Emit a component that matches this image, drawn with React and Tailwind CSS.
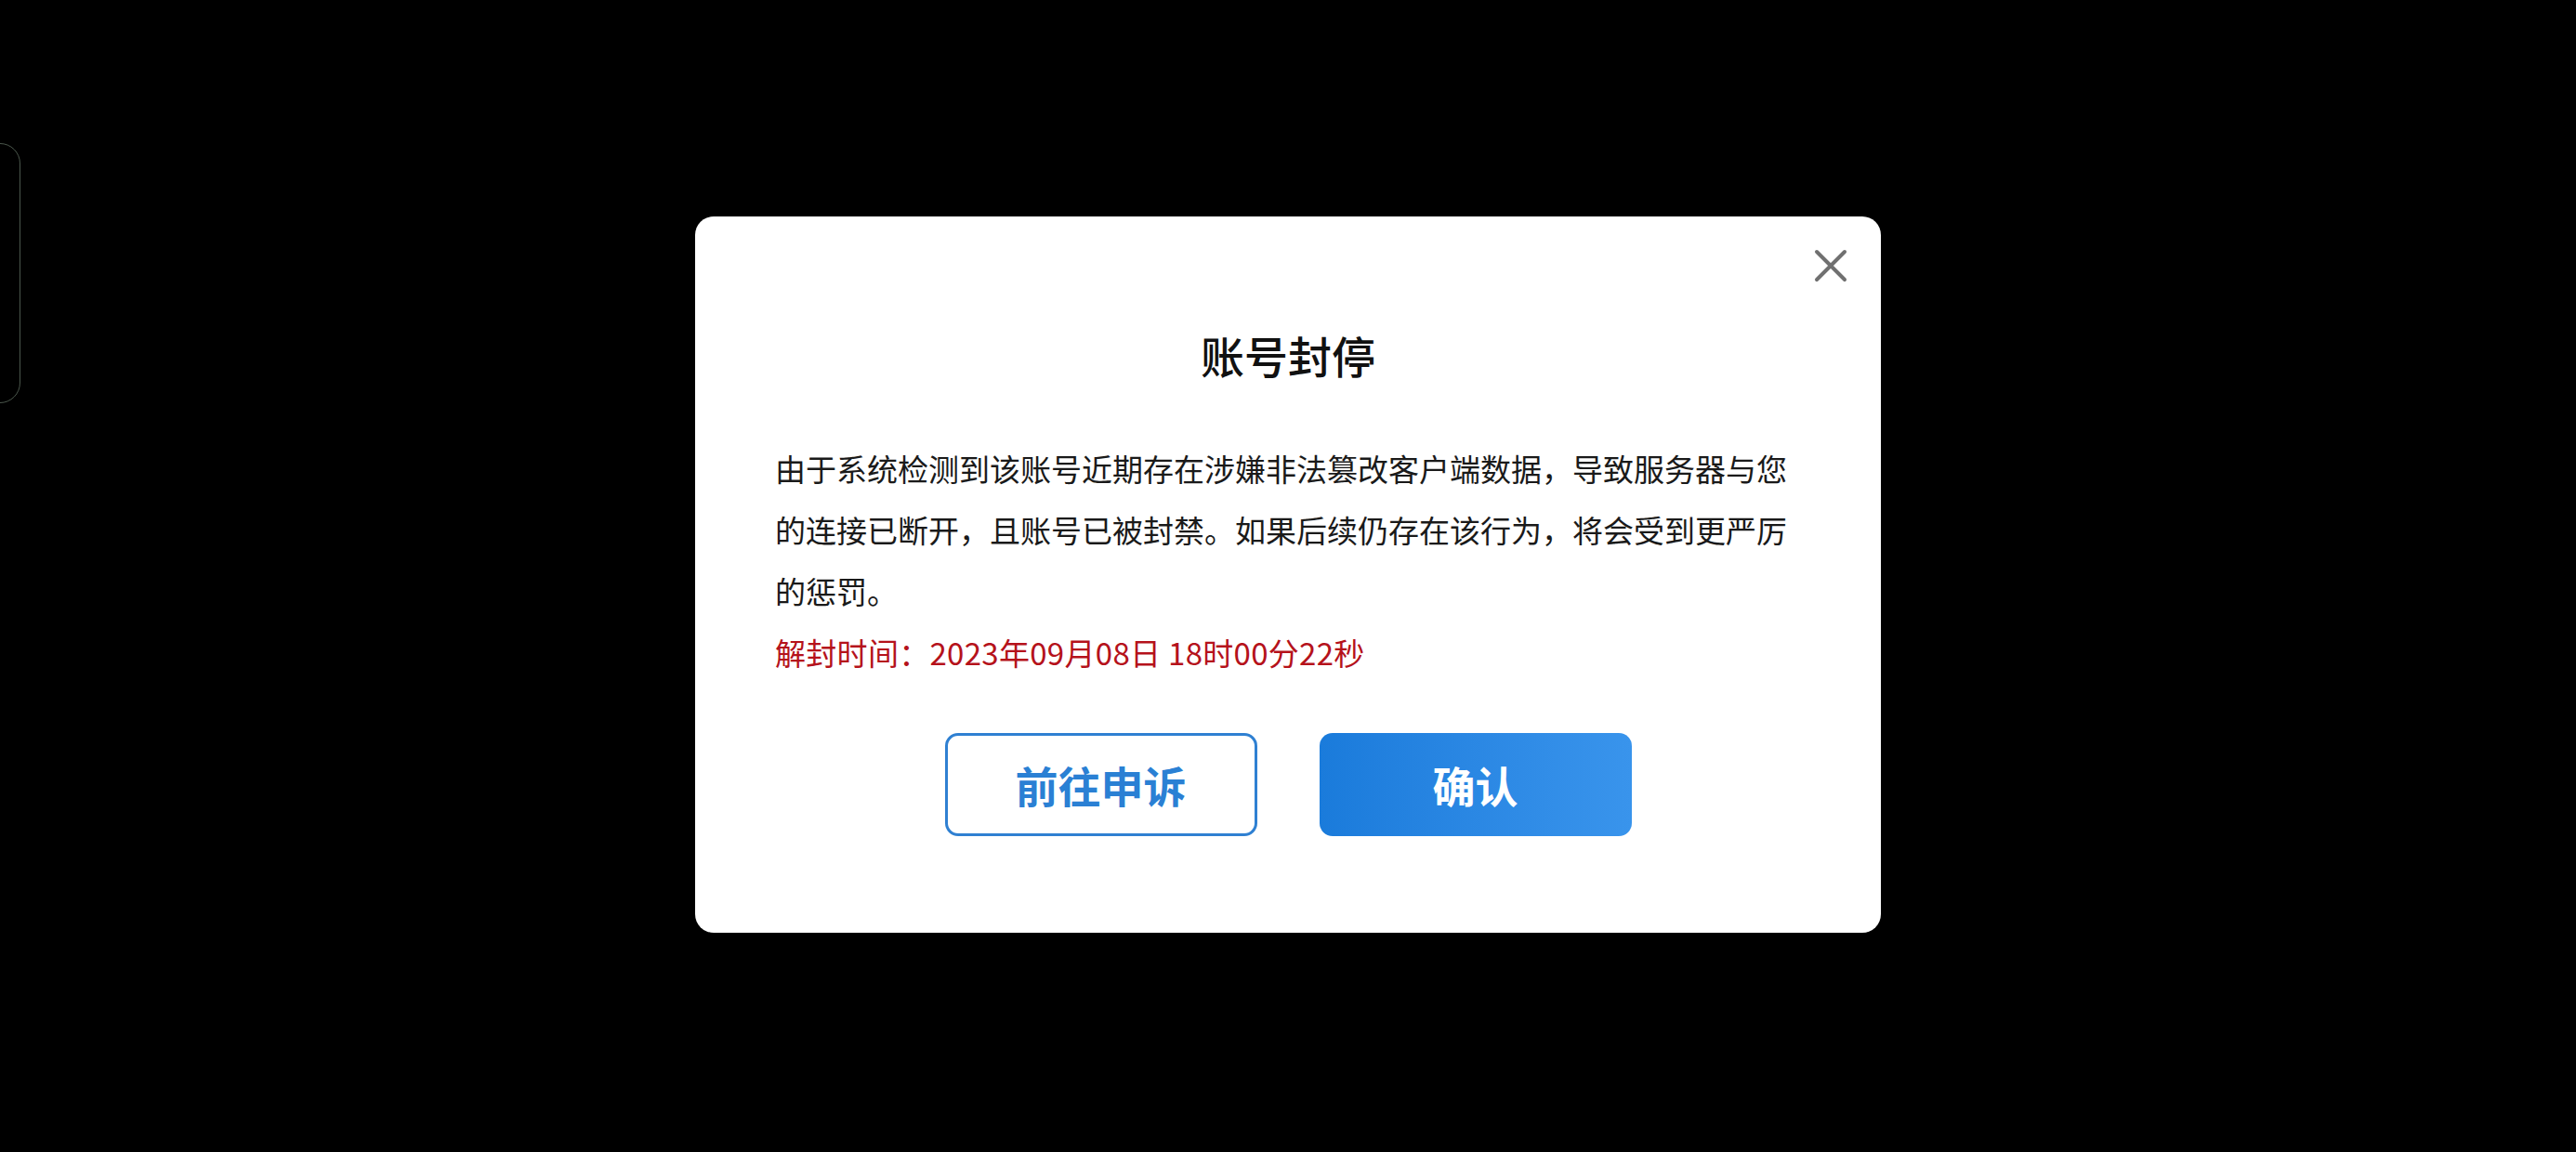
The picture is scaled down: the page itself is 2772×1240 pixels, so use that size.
import React from 'react';

const cjk = { fontFamily: '"Noto Sans CJK SC", "Noto Sans", sans-serif' };

function CloseIcon() {
  return (
    <svg width="36" height="36" viewBox="0 0 36 36" fill="none">
      <path d="M3 3L33 33M33 3L3 33" stroke="#707070" strokeWidth="4" strokeLinecap="round" />
    </svg>
  );
}

export default function App() {
  return (
    <div className="relative h-[1240px] w-full overflow-hidden bg-black" style={cjk}>
      {/* side handle peeking from the left edge */}
      <div className="absolute left-[-40px] top-[154px] h-[280px] w-[62px] rounded-[22px] border border-[#4b574c]" />

      <div className="flex h-full items-start justify-center pt-[233px]">
        <div className="relative flex w-[1276px] flex-col rounded-[20px] bg-white px-[86px] pb-[104px] pt-[117px]">
          <button className="absolute right-[36px] top-[35px]">
            <CloseIcon />
          </button>

          <h1 className="text-center text-[47px] font-medium leading-[64px] text-[#111]">账号封停</h1>

          <p className="mt-[57px] text-[33px] leading-[66px] text-[#1a1a1a]">
            由于系统检测到该账号近期存在涉嫌非法篡改客户端数据，导致服务器与您的连接已断开，且账号已被封禁。如果后续仍存在该行为，将会受到更严厉的惩罚。
          </p>
          <p className="text-[33px] leading-[66px] tracking-[0.3px] text-[#b5121b]">解封时间：2023年09月08日 18时00分22秒</p>

          <div className="mt-[54px] flex justify-center gap-[67px]">
            <button className="flex h-[111px] w-[336px] items-center justify-center rounded-[14px] border-[3px] border-[#2f80d2] bg-white text-[46px] font-bold text-[#2a80d4]">
              前往申诉
            </button>
            <button className="flex h-[111px] w-[336px] items-center justify-center rounded-[14px] bg-gradient-to-r from-[#1a7bdb] to-[#3994ec] text-[46px] font-bold text-white">
              确认
            </button>
          </div>
        </div>
      </div>
    </div>
  );
}
